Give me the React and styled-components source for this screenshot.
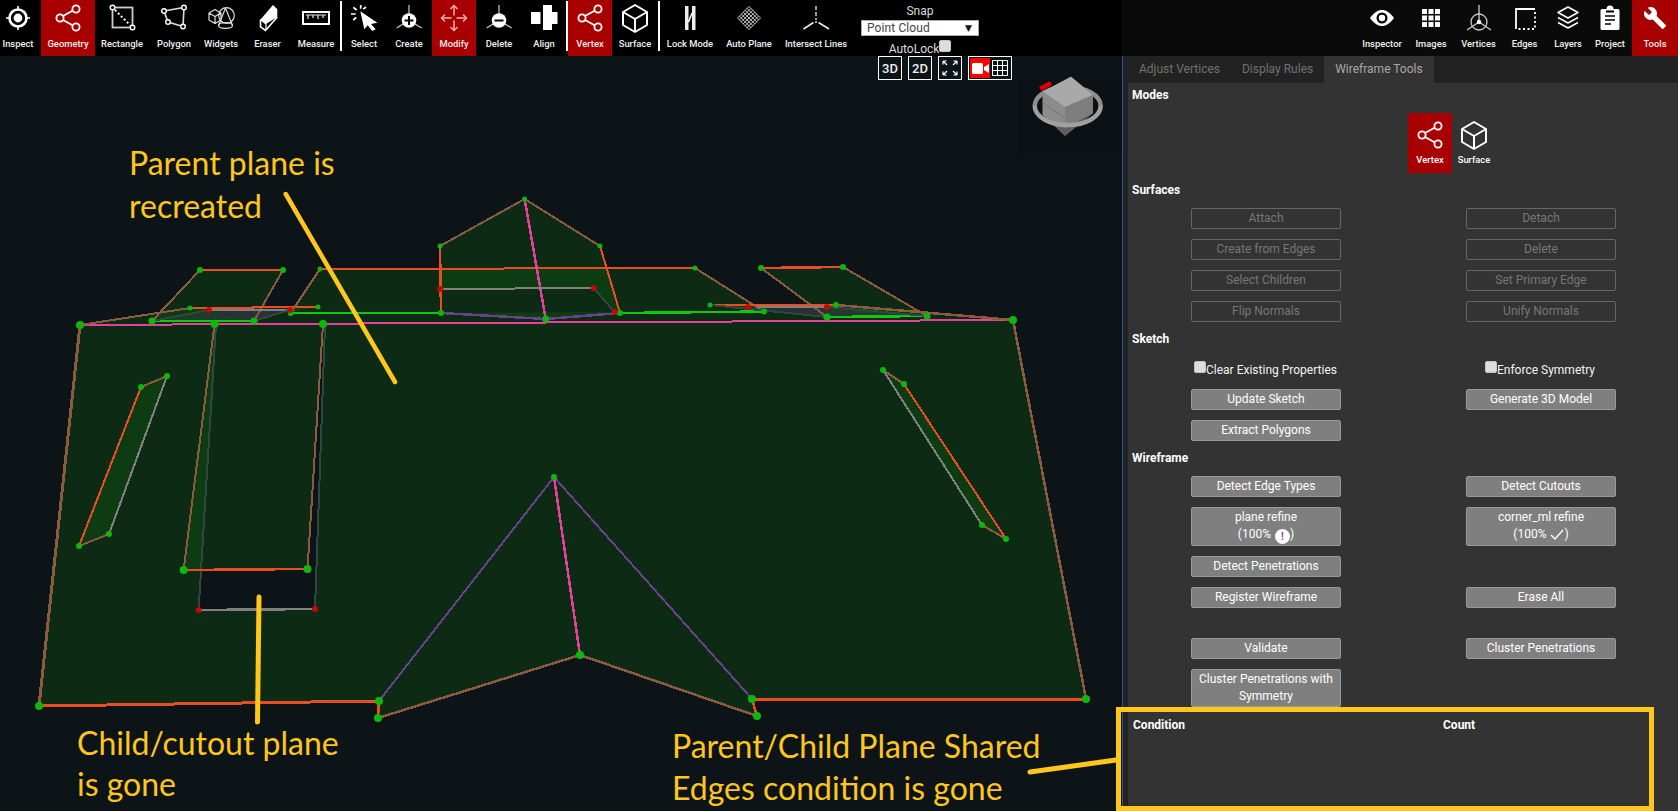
import React from "react";
import styled, { createGlobalStyle } from "styled-components";

const Global = createGlobalStyle`
  html, body { margin: 0; padding: 0; background: #0d1418; }
  body { font-family: Roboto, "Liberation Sans", sans-serif; }
`;

const Page = styled.div`
  position: relative;
  width: 1678px;
  height: 811px;
  overflow: hidden;
  display: flex;
  flex-direction: column;
  background: #0d1418;
`;

const Toolbar = styled.header`
  display: flex;
  height: 56px;
  flex: 0 0 56px;
  position: relative;
  z-index: 2;
`;
const ToolsLeft = styled.div`
  flex: 0 0 1122px;
  display: flex;
  background: #000;
`;
const ToolsRight = styled.div`
  flex: 1;
  display: flex;
  justify-content: flex-end;
  background: #0a0a0a;
`;
const Tool = styled.div`
  flex: 0 0 ${(p) => p.$w}px;
  margin-right: ${(p) => p.$mr || 0}px;
  height: 56px;
  display: flex;
  flex-direction: column;
  align-items: center;
  background: ${(p) => (p.$on ? "#a80000" : "transparent")};
  color: #f0f0f0;
  font-size: 9.4px;
  font-weight: 500;
  white-space: nowrap;
  line-height: 12px;
`;
const ToolIcon = styled.svg`
  width: 32px;
  height: 32px;
  margin-top: 2px;
  margin-bottom: 4px;
  display: block;
  flex: none;
`;
const Sep = styled.div`
  flex: 0 0 2px;
  height: 50px;
  margin-top: 1px;
  background: #fff;
`;

const SnapBlock = styled.div`
  flex: 0 0 118px;
  margin-left: 7px;
  display: flex;
  flex-direction: column;
  align-items: center;
  color: #ddd;
  font-size: 12px;
`;
const SnapLabel = styled.div`
  height: 14px;
  line-height: 14px;
  margin-top: 4px;
  margin-bottom: 2px;
`;
const SnapSelect = styled.div`
  box-sizing: border-box;
  width: 118px;
  height: 18px;
  background: #fff;
  border: 1px solid #aaa;
  color: #444;
  padding: 0 6px 0 5px;
  display: flex;
  justify-content: space-between;
  align-items: center;
  font-size: 12px;
  letter-spacing: 0.1px;
`;
const Caret = styled.span`
  color: #111;
  font-size: 9px;
  font-family: "DejaVu Sans", sans-serif;
`;
const AutoLock = styled.div`
  display: flex;
  align-items: flex-start;
  margin-top: 4px;
  height: 16px;
  line-height: 18px;
`;
const Check = styled.span`
  display: inline-block;
  box-sizing: border-box;
  width: 12px;
  height: 12px;
  background: #ddd;
  border: 1px solid #c4c4c4;
  border-radius: 2px;
  flex: none;
`;

const Main = styled.div`
  flex: 1;
  display: flex;
  min-height: 0;
`;
const Canvas = styled.div`
  flex: 0 0 1122px;
  position: relative;
  background: #0d1418;
`;
const WireSvg = styled.svg`
  position: absolute;
  left: 0;
  top: 0;
  width: 1122px;
  height: 755px;
  overflow: visible;
`;
const ViewControls = styled.div`
  position: absolute;
  left: 878px;
  top: 0;
  display: flex;
  gap: 6px;
`;
const ViewBtn = styled.div`
  box-sizing: border-box;
  height: 24px;
  width: ${(p) => p.$w || 24}px;
  border: 1px solid #fff;
  color: #eee;
  font-size: 13px;
  font-weight: 500;
  display: flex;
  align-items: center;
  justify-content: center;
  padding: ${(p) => (p.$split ? "1px" : "0")};
`;
const CamCell = styled.div`
  width: 20px;
  height: 100%;
  background: #ff0000;
  display: flex;
  align-items: center;
  justify-content: center;
`;
const GridCell = styled.div`
  flex: 1;
  height: 100%;
  display: flex;
  align-items: center;
  justify-content: center;
`;

const Splitter = styled.div`
  flex: 0 0 6px;
  box-sizing: border-box;
  background: #222;
  border-left: 1px solid #2a5a9a;
`;

const Panel = styled.aside`
  flex: 1;
  background: #333;
  display: flex;
  flex-direction: column;
  color: #fff;
  font-size: 12px;
`;
const Tabs = styled.div`
  display: flex;
  height: 27px;
  flex: none;
  background: #222;
`;
const Tab = styled.div`
  height: 27px;
  line-height: 27px;
  padding: 0 11px;
  background: ${(p) => (p.$on ? "#333" : "transparent")};
  color: ${(p) => (p.$on ? "#a8a8a8" : "#717171")};
  font-size: 12px;
`;
const Heading = styled.div`
  height: 14px;
  line-height: 14px;
  font-weight: 700;
  font-size: 12px;
  padding-left: 4px;
  margin-top: ${(p) => p.$mt}px;
`;
const ModeRow = styled.div`
  display: flex;
  margin: 11px 0 0 280px;
  height: 60px;
`;
const Mode = styled.div`
  flex: 0 0 44px;
  height: 60px;
  display: flex;
  flex-direction: column;
  align-items: center;
  background: ${(p) => (p.$on ? "#a80000" : "transparent")};
  font-size: 9.4px;
  font-weight: 500;
  line-height: 12px;
`;
const ModeIcon = styled(ToolIcon)`
  margin-top: 6px;
  margin-bottom: 3px;
`;
const Row = styled.div`
  display: grid;
  grid-template-columns: 150px 150px;
  column-gap: 125px;
  margin-left: 63px;
  margin-top: ${(p) => (p.$mt === undefined ? 10 : p.$mt)}px;
`;
const Btn = styled.div`
  box-sizing: border-box;
  min-height: ${(p) => p.$h || 21}px;
  border: 1px solid ${(p) => (p.$off ? "#666" : "#999")};
  border-radius: 2px;
  background: ${(p) => (p.$off ? "transparent" : "#7f7f7f")};
  color: ${(p) => (p.$off ? "#777" : "#fff")};
  text-align: center;
  font-size: 12px;
  line-height: ${(p) => (p.$tall ? "17px" : "18px")};
  padding: ${(p) => (p.$tall ? "1px 4px" : "0 4px")};
`;
const CheckRow = styled.div`
  display: grid;
  grid-template-columns: 150px 150px;
  column-gap: 125px;
  margin-left: 63px;
  margin-top: 15px;
  height: 16px;
`;
const CheckItem = styled.div`
  display: flex;
  align-items: flex-start;
  padding-left: ${(p) => p.$pl}px;
  line-height: 18px;
  white-space: nowrap;
  color: #f2f2f2;
`;
const Badge = styled.span`
  display: inline-block;
  width: 15px;
  height: 15px;
  line-height: 15px;
  border-radius: 50%;
  background: #fff;
  color: #a040b0;
  font-size: 10px;
  font-weight: 700;
  margin-left: 4px;
  vertical-align: -2px;
`;
const Tick = styled.svg`
  width: 14px;
  height: 12px;
  margin-left: 4px;
  vertical-align: -2px;
`;
const CondTable = styled.div`
  margin-top: 11px;
  display: grid;
  grid-template-columns: 310px 1fr;
  padding-left: 5px;
  font-weight: 700;
  font-size: 12px;
  line-height: 14px;
`;

const Note = styled.div`
  position: absolute;
  left: ${(p) => p.$x}px;
  top: ${(p) => p.$y}px;
  color: #ffc61c;
  font-family: Lato, "Open Sans", sans-serif;
  font-size: 32px;
  line-height: ${(p) => p.$lh}px;
  white-space: nowrap;
  z-index: 3;
`;
const CalloutBox = styled.div`
  position: absolute;
  left: 1116px;
  top: 707px;
  width: 538px;
  height: 104px;
  box-sizing: border-box;
  border: 5px solid #ffc61c;
  z-index: 3;
`;

/* ---------- icons ---------- */
const W = "#fff";
const Icon = ({ children }) => <ToolIcon viewBox="0 0 32 32">{children}</ToolIcon>;

const Inspect = () => (
  <Icon>
    <circle cx="16" cy="16" r="8.5" fill="none" stroke={W} strokeWidth="2.6" />
    <circle cx="16" cy="16" r="4.4" fill={W} />
    <path d="M16 4v3M16 25v3M4 16h3M25 16h3" stroke={W} strokeWidth="1.6" />
  </Icon>
);
const ShareShape = () => (
  <>
    <path d="M11 14L21 8.5M11 18l10 5.5" stroke={W} strokeWidth="1.8" />
    <circle cx="24" cy="7" r="3.6" fill="none" stroke={W} strokeWidth="1.8" />
    <circle cx="8" cy="16" r="3.6" fill="none" stroke={W} strokeWidth="1.8" />
    <circle cx="24" cy="25" r="3.6" fill="none" stroke={W} strokeWidth="1.8" />
  </>
);
const Share = () => <Icon><ShareShape /></Icon>;
const Rectangle = () => (
  <Icon>
    <rect x="6.5" y="5.5" width="20" height="20" fill="none" stroke="#ccc" strokeWidth="1.8" />
    <path d="M9 8L24 23" stroke={W} strokeWidth="2" strokeDasharray="2 2.2" />
    <circle cx="6.5" cy="5.5" r="2.3" fill="#000" stroke={W} strokeWidth="1.4" />
    <circle cx="26.5" cy="25.5" r="2.3" fill="#000" stroke={W} strokeWidth="1.4" />
  </Icon>
);
const Polygon = () => (
  <Icon>
    <path d="M6 9L26 5.5L25 24.5L10 20Z" fill="none" stroke="#ddd" strokeWidth="1.6" />
    {[[6, 9], [26, 5.5], [25, 24.5], [10, 20]].map(([x, y]) => (
      <circle key={x} cx={x} cy={y} r="2.3" fill="#000" stroke={W} strokeWidth="1.4" />
    ))}
  </Icon>
);
const Widgets = () => (
  <Icon>
    <g fill="none" stroke="#ddd" strokeWidth="1.2">
      <circle cx="21.5" cy="13.5" r="7.8" />
      <path d="M20.5 6L13.5 23.5M20.5 6L27.5 23.5" />
      <ellipse cx="20.5" cy="23.5" rx="7" ry="2.8" />
      <path d="M10 7.5L16 11v7l-6 3.5-6-3.5v-7zM4 11l6 3.5 6-3.5M10 14.5v7" />
    </g>
  </Icon>
);
const Eraser = () => (
  <Icon>
    <path d="M21 3l4.3 4.3V15L14 22 8.5 17.500z" fill={W} />
    <path d="M8.500 17.500v7.300l5 3.700L25.300 15" fill="none" stroke={W} strokeWidth="1.6" />
    <path d="M8.500 17.500L14 22v6" fill="none" stroke={W} strokeWidth="1.2" />
  </Icon>
);
const Measure = () => (
  <Icon>
    <rect x="3" y="10" width="26" height="12" fill="none" stroke={W} strokeWidth="2" />
    <path d="M8 13v4M13 13v3M18 13v4M23 13v3" stroke="#ccc" strokeWidth="1.4" />
    <path d="M6 13h20" stroke="#ccc" strokeWidth="1.2" />
  </Icon>
);
const Select = () => (
  <Icon>
    <path d="M12.300 9.300L29.300 20.700L23 22L27.700 27.300L24.300 29L19.700 23.300L16.300 27.300Z" fill={W} />
    <path d="M5.300 5.300L8.700 8M12.700 3v3.700M18 5l-2.700 2.200M3 12h4.700M5.300 18l3-2.700" stroke={W} strokeWidth="1.7" />
  </Icon>
);
const CircleTool = ({ plus }) => (
  <Icon>
    <path d="M16 3v9M10 22l-6.300 4M22 22l6.700 4" stroke="#ccc" strokeWidth="1.2" />
    <circle cx="16" cy="18.500" r="7.300" fill={W} />
    <path d="M11.500 18.500h9" stroke="#000" strokeWidth="2" />
    {plus && <path d="M16 14v9" stroke="#000" strokeWidth="2" />}
  </Icon>
);
const CreateIcon = () => <CircleTool plus />;
const DeleteIcon = () => <CircleTool />;
const Modify = () => (
  <Icon>
    <g fill="none" stroke="#efb0b0" strokeWidth="1.5">
      <path d="M3.500 16h10M18.500 16h10M16 3.500v10M16 18.500v10" />
      <path d="M7 12.500L3.500 16 7 19.500M25 12.500L28.500 16 25 19.500M12.500 7L16 3.500 19.500 7M12.500 25L16 28.500 19.500 25" />
    </g>
  </Icon>
);
const Align = () => (
  <Icon>
    <path d="M3 10h9.500v12H3zM15 3h9v25h-9zM24 10h5.500v12H24z" fill={W} />
  </Icon>
);
const CubeShape = () => (
  <path d="M16 3L28 10V23L16 30L4 23V10ZM4 10L16 17L28 10M16 17V30" fill="none" stroke={W} strokeWidth="2" strokeLinejoin="round" />
);
const Cube = () => <Icon><CubeShape /></Icon>;
const LockMode = () => (
  <Icon>
    <path d="M11 4h3.500v24H11zM18 4h3.500v24H18z" fill="#eee" />
    <path d="M14.500 20L18 11" stroke={W} strokeWidth="1.5" />
  </Icon>
);
const AutoPlane = () => {
  const steps = [0, 1, 2, 3, 4, 5, 6];
  const s = 23 / 6 / 2;
  return (
    <Icon>
      <g stroke="#ddd" strokeWidth="0.9">
        {steps.map((i) => (
          <React.Fragment key={i}>
            <line x1={4.5 + i * s} y1={16 - i * s} x2={16 + i * s} y2={27.5 - i * s} />
            <line x1={4.5 + i * s} y1={16 + i * s} x2={16 + i * s} y2={4.5 + i * s} />
          </React.Fragment>
        ))}
      </g>
    </Icon>
  );
};
const Intersect = () => (
  <Icon>
    <path d="M16 4v4M16 10v4M16 16v2" stroke="#eee" strokeWidth="1.3" />
    <path d="M13.500 20.500L3.500 27M18.500 20.500L29 27" stroke="#eee" strokeWidth="1.5" />
    <circle cx="16" cy="20" r="1" fill="#eee" />
  </Icon>
);
const Eye = () => (
  <Icon>
    <path d="M4 16C8 10.500 12 8 16 8s8 2.500 12 8c-4 5.500-8 8-12 8s-8-2.500-12-8z" fill={W} />
    <circle cx="16" cy="16" r="5.5" fill="#000" />
    <circle cx="16" cy="16" r="3.2" fill={W} />
  </Icon>
);
const Images = () => (
  <Icon>
    {[7, 13.5, 20].flatMap((y) =>
      [7, 13.5, 20].map((x) => <rect key={`${x}-${y}`} x={x} y={y} width="5" height="5" fill={W} />)
    )}
  </Icon>
);
const Vertices = () => (
  <Icon>
    <circle cx="16" cy="20" r="8" fill="none" stroke="#ccc" strokeWidth="1.3" />
    <path d="M16 3v17M16 20L4 28M16 20l12 8" stroke="#ccc" strokeWidth="1.3" />
    <circle cx="16" cy="20" r="2.2" fill={W} />
  </Icon>
);
const Edges = () => (
  <Icon>
    <path d="M7 27V7h19" fill="none" stroke={W} strokeWidth="1.8" />
    <path d="M26 10v17H9" fill="none" stroke={W} strokeWidth="1.8" strokeDasharray="2 2.5" />
  </Icon>
);
const Layers = () => (
  <Icon>
    <g fill="none" stroke={W} strokeWidth="1.5" strokeLinejoin="round">
      <path d="M16 5l10 5.500-10 5.500-10-5.500z" />
      <path d="M6 15.500L16 21l10-5.500" />
      <path d="M6 20.500L16 26l10-5.500" />
    </g>
  </Icon>
);
const Project = () => (
  <Icon>
    <path d="M8 7h4.500a3.500 3.500 0 0 1 7 0H24a1.500 1.500 0 0 1 1.500 1.500v18A1.500 1.500 0 0 1 24 28H8a1.500 1.500 0 0 1-1.500-1.500v-18A1.500 1.500 0 0 1 8 7z" fill={W} />
    <path d="M11 14h10M11 18h10M11 22h6" stroke="#000" strokeWidth="1.7" />
    <rect x="12" y="8.500" width="8" height="2" fill="#000" />
  </Icon>
);
const Tools = () => (
  <Icon>
    <g transform="translate(4 4)">
      <path d="M22.700 19l-9.100-9.100c.9-2.300.4-5-1.500-6.900-2-2-5-2.400-7.400-1.300L9 6 6 9 1.600 4.700C.4 7.100.9 10.100 2.900 12.100c1.900 1.900 4.600 2.400 6.900 1.500l9.100 9.100c.4.400 1 .4 1.400 0l2.300-2.300c.5-.4.5-1.100.1-1.400z" fill={W} />
    </g>
  </Icon>
);

/* ---------- wireframe data ---------- */
const BR = "#8a5b3e";
const OR = "#e84e22";
const PK = "#e5409a";
const PU = "#6a3f8c";
const GN = "#10c810";
const GY = "#808080";
const DG = "#2f473f";

const PLANE = "rgba(16,128,8,0.2)";
const planes = [
  "M80 325L1013 320L1086 699L752 699L757 716L580 655L378 718L379 701L39 706ZM216 325L324 325L315 609L198.6 610Z",
  "M214.6 324L323 324L307.5 569L183.6 570Z",
  "M141 387L167 376L109 534L79 546Z",
  "M883 370L904 384L1006 539L982 525Z",
  "M200 270L283 270L254 321L152 321Z",
  "M761 268L843 267L927 316L827 317Z",
  "M440 246L524.6 199L600 246L620 313L545.7 319L441 313Z",
  "M320 269L695 268L764 311.5L620 313L545.7 319L441 313L290.7 313ZM440.4 289L593.6 288L614.6 312L441 313Z",
  "M80 325L190 308L318 307L290 313L254 321L152 321Z",
  "M710 305L836 305L1013 320L927 316L827 317Z",
  "M152 321L254 321L290.7 313L441 313L545.7 319L620 313L764 311.5L827 317L927 316L1013 320L80 325Z",
];
const tints = [
  ["M209 310L290 310L254 321Z", "#2a2f38"],
  ["M152 321L209 310L254 321Z", "#1e3a2a"],
  ["M757 307L827 307L827 317Z", "#2a2f38"],
  ["M710 305L757 307L827 317Z", "#1e3a2a"],
  ["M827 307L927 316L827 317Z", "#223a30"],
];
const edges = [
  [80, 325, 1013, 320, PK, 2],
  [39, 706, 80, 325, BR, 3],
  [1086, 699, 1013, 320, BR, 2.5],
  [39, 706, 379, 701, OR, 3],
  [379, 701, 378, 718, OR, 2.5],
  [378, 718, 580, 655, BR, 2.5],
  [580, 655, 757, 716, BR, 2.5],
  [757, 716, 752, 699, OR, 2.5],
  [752, 699, 1086, 699, OR, 3],
  [379, 701, 554, 477, PU, 2],
  [554, 477, 752, 699, PU, 2],
  [554, 477, 580, 655, PK, 2.5],
  [216, 325, 198.6, 610, DG, 2],
  [325, 325, 315, 609, DG, 2],
  [214.6, 324, 183.6, 570, BR, 2],
  [323, 324, 307.5, 569, BR, 2],
  [183.6, 570, 307.5, 569, OR, 2.5],
  [198.6, 610, 315, 609, GY, 2.5],
  [141, 387, 167, 376, BR, 2],
  [167, 376, 109, 534, GY, 2],
  [109, 534, 79, 546, BR, 2],
  [79, 546, 141, 387, OR, 2],
  [883, 370, 904, 384, BR, 2],
  [904, 384, 1006, 539, OR, 2],
  [1006, 539, 982, 525, BR, 2],
  [982, 525, 883, 370, GY, 2],
  [200, 270, 283, 270, OR, 2],
  [283, 270, 254, 321, BR, 2],
  [152, 321, 200, 270, BR, 2],
  [152, 321, 254, 321, GN, 2.5],
  [761, 268, 843, 267, OR, 2.5],
  [843, 267, 927, 316, BR, 2],
  [761, 268, 827, 317, BR, 2],
  [827, 317, 927, 316, GN, 2.5],
  [80, 325, 190, 308, BR, 2],
  [190, 308, 318, 307, OR, 2],
  [209, 310, 290, 310, GY, 2],
  [152, 321, 209, 310, DG, 2],
  [254, 321, 290, 310, DG, 2],
  [320, 269, 695, 268, OR, 2],
  [320, 269, 290.7, 313, BR, 2],
  [695, 268, 764, 311.5, BR, 2],
  [290.7, 313, 441, 313, GN, 2],
  [620, 313, 764, 311.5, GN, 2.5],
  [440, 246, 524.6, 199, BR, 2],
  [524.6, 199, 600, 246, BR, 2],
  [600, 246, 620, 313, OR, 2],
  [440, 246, 441, 313, OR, 2.5],
  [524.6, 199, 545.7, 319, PK, 2.5],
  [441, 313, 545.7, 319, PU, 2.5],
  [545.7, 319, 620, 313, PU, 2.5],
  [440.4, 289, 593.6, 288, GY, 2],
  [593.6, 288, 614.6, 312, DG, 2],
  [710, 305, 836, 305, OR, 2],
  [757, 307, 827, 307, GY, 2.5],
  [710, 305, 827, 317, DG, 2],
  [827, 307, 927, 316, DG, 2],
  [836, 305, 1013, 320, BR, 2.5],
];
const greens = [
  [80, 325, 4], [1013, 320, 4], [1086, 699, 4], [39, 706, 4], [379, 701, 4], [378, 718, 4], [757, 716, 4], [752, 699, 4],
  [580, 655, 4], [554, 477, 3], [214.6, 324, 4], [323, 324, 4], [183.6, 570, 4], [307.5, 569, 4],
  [141, 387, 3], [167, 376, 3], [109, 534, 3], [79, 546, 3], [883, 370, 3], [904, 384, 3], [1006, 539, 3], [982, 525, 3],
  [200, 270, 3], [283, 270, 3], [254, 321, 3.5], [152, 321, 3.5], [761, 268, 3], [843, 267, 3], [927, 316, 3.5], [827, 317, 3.5],
  [190, 308, 2.5], [318, 307, 2.5], [320, 269, 2.5], [695, 268, 2.5], [290.7, 313, 3], [441, 313, 3], [620, 313, 3], [764, 311.5, 3],
  [440, 246, 2.5], [600, 246, 2.5], [524.6, 199, 2.5], [545.7, 319, 3.5], [710, 305, 2.5], [836, 305, 3],
];
const reds = [
  [198.6, 610], [315, 609], [209, 310], [290, 310], [440.4, 289], [593.6, 288], [614.6, 312], [748, 307], [827, 307],
];

const Wireframe = () => (
  <WireSvg viewBox="0 56 1122 755">
    <rect x="1018" y="80" width="104" height="76" fill="#0b1114" />
    {planes.map((d) => (
      <path key={d} d={d} fill={PLANE} fillRule="evenodd" />
    ))}
    {tints.map(([d, c]) => (
      <path key={d} d={d} fill={c} />
    ))}
    <g shapeRendering="crispEdges">
      {edges.map(([a, b, c, d, col, w]) => (
        <line key={`${a}-${b}-${c}-${d}`} x1={a} y1={b} x2={c} y2={d} stroke={col} strokeWidth={w} />
      ))}
    </g>
    {greens.map(([x, y, r]) => (
      <circle key={`${x}-${y}`} cx={x} cy={y} r={r} fill="#0cb80c" />
    ))}
    {reds.map(([x, y]) => (
      <circle key={`${x}-${y}`} cx={x} cy={y} r="3" fill="#c40808" />
    ))}

    <g>
      <path d="M1034.7 106A33 19 0 0 1 1100.7 106" fill="none" stroke="#8f8f8f" strokeWidth="4.5" />
      <path d="M1071 76.7L1093 95V113L1065 135.7L1042.700 115V91.700Z" fill="#888" />
      <path d="M1071 76.700L1093 95L1065 107L1042.700 91.700Z" fill="#a9a9a9" />
      <path d="M1042.700 91.700L1065 107V128L1042.700 115Z" fill="#8c8c8c" />
      <path d="M1042.700 103L1065 118" stroke="#777" strokeWidth="1" fill="none" />
      <path d="M1065 107L1093 95V113L1065 128Z" fill="#7e7e7e" />
      <path d="M1065 128L1093 113L1065 135.700L1053 124Z" fill="#5f5f5f" />
      <path d="M1039 86.700L1050 81L1052 85L1041.700 90.700Z" fill="#e00000" />
      <path d="M1034.700 106A33 19 0 0 0 1100.700 106" fill="none" stroke="#a0a0a0" strokeWidth="4.5" />
    </g>

    <g stroke="#ffc61c" strokeLinecap="round" fill="none">
      <line x1="285.7" y1="194" x2="395" y2="382" strokeWidth="4.5" />
      <line x1="259" y1="597" x2="257.5" y2="722" strokeWidth="5" />
      <line x1="1030" y1="772" x2="1116" y2="760" strokeWidth="5" />
    </g>
  </WireSvg>
);

const Row2 = ({ a, b, off, mt, tall }) => (
  <Row $mt={mt}>
    {a ? <Btn $off={off} $tall={tall}>{a}</Btn> : <span />}
    {b ? <Btn $off={off} $tall={tall}>{b}</Btn> : <span />}
  </Row>
);

const leftTools = [
  { label: "Inspect", w: 36, mr: 5, icon: Inspect },
  { label: "Geometry", w: 54, icon: Share, on: true },
  { label: "Rectangle", w: 54, icon: Rectangle },
  { label: "Polygon", w: 50, icon: Polygon },
  { label: "Widgets", w: 44, icon: Widgets },
  { label: "Eraser", w: 49, icon: Eraser },
  { label: "Measure", w: 48, icon: Measure },
  { sep: true, label: "s1" },
  { label: "Select", w: 44, icon: Select },
  { label: "Create", w: 46, icon: CreateIcon },
  { label: "Modify", w: 44, icon: Modify, on: true },
  { label: "Delete", w: 46, icon: DeleteIcon },
  { label: "Align", w: 44, icon: Align },
  { sep: true, label: "s2" },
  { label: "Vertex", w: 44, icon: Share, on: true },
  { label: "Surface", w: 46, icon: Cube },
  { sep: true, label: "s3" },
  { label: "Lock Mode", w: 60, icon: LockMode },
  { label: "Auto Plane", w: 58, icon: AutoPlane },
  { label: "Intersect Lines", w: 76, icon: Intersect },
];
const rightTools = [
  { label: "Inspector", w: 48, icon: Eye },
  { label: "Images", w: 50, icon: Images },
  { label: "Vertices", w: 45, icon: Vertices },
  { label: "Edges", w: 47, icon: Edges },
  { label: "Layers", w: 40, icon: Layers },
  { label: "Project", w: 44, icon: Project },
  { label: "Tools", w: 46, icon: Tools, on: true },
];

const renderTool = (t) => {
  if (t.sep) return <Sep key={t.label} />;
  const Glyph = t.icon;
  return (
    <Tool key={t.label} $w={t.w} $mr={t.mr} $on={t.on}>
      <Glyph />
      <span>{t.label}</span>
    </Tool>
  );
};

export default function App() {
  return (
    <Page>
      <Global />
      <Toolbar>
        <ToolsLeft>
          {leftTools.map(renderTool)}
          <SnapBlock>
            <SnapLabel>Snap</SnapLabel>
            <SnapSelect>
              <span>Point Cloud</span>
              <Caret>▼</Caret>
            </SnapSelect>
            <AutoLock>
              <span>AutoLock</span>
              <Check />
            </AutoLock>
          </SnapBlock>
        </ToolsLeft>
        <ToolsRight>{rightTools.map(renderTool)}</ToolsRight>
      </Toolbar>

      <Main>
        <Canvas>
          <Wireframe />
          <ViewControls>
            <ViewBtn>3D</ViewBtn>
            <ViewBtn>2D</ViewBtn>
            <ViewBtn>
              <svg width="18" height="18" viewBox="0 0 18 18" fill="none" stroke="#fff" strokeWidth="1.2">
                <path d="M2 2l4 4M2 2v3.500M2 2h3.500M16 2l-4 4M16 2v3.500M16 2h-3.500M2 16l4-4M2 16v-3.500M2 16h3.500M16 16l-4-4M16 16v-3.500M16 16h-3.500" />
              </svg>
            </ViewBtn>
            <ViewBtn $w={44} $split>
              <CamCell>
                <svg width="17" height="11" viewBox="0 0 17 11">
                  <rect x="0" y="0" width="11" height="11" rx="1.5" fill="#fff" />
                  <path d="M12 4l5-3v9l-5-3z" fill="#fff" />
                </svg>
              </CamCell>
              <GridCell>
                <svg width="16" height="16" viewBox="0 0 16 16" fill="none" stroke="#fff" strokeWidth="1">
                  <path d="M.5.5h15v15H.5zM5.500.5v15M10.500.5v15M.5 5.500h15M.5 10.500h15" />
                </svg>
              </GridCell>
            </ViewBtn>
          </ViewControls>
        </Canvas>
        <Splitter />
        <Panel>
          <Tabs>
            <Tab>Adjust Vertices</Tab>
            <Tab>Display Rules</Tab>
            <Tab $on>Wireframe Tools</Tab>
          </Tabs>
          <Heading $mt={5}>Modes</Heading>
          <ModeRow>
            <Mode $on>
              <ModeIcon viewBox="0 0 32 32"><ShareShape /></ModeIcon>
              <span>Vertex</span>
            </Mode>
            <Mode>
              <ModeIcon viewBox="0 0 32 32"><CubeShape /></ModeIcon>
              <span>Surface</span>
            </Mode>
          </ModeRow>
          <Heading $mt={10}>Surfaces</Heading>
          <Row2 off mt={11} a="Attach" b="Detach" />
          <Row2 off a="Create from Edges" b="Delete" />
          <Row2 off a="Select Children" b="Set Primary Edge" />
          <Row2 off a="Flip Normals" b="Unify Normals" />
          <Heading $mt={10}>Sketch</Heading>
          <CheckRow>
            <CheckItem $pl={3}><Check />Clear Existing Properties</CheckItem>
            <CheckItem $pl={19}><Check />Enforce Symmetry</CheckItem>
          </CheckRow>
          <Row2 mt={12} a="Update Sketch" b="Generate 3D Model" />
          <Row2 a="Extract Polygons" />
          <Heading $mt={10}>Wireframe</Heading>
          <Row2 mt={11} a="Detect Edge Types" b="Detect Cutouts" />
          <Row>
            <Btn $tall $h={39}>plane refine<br />(100%<Badge>!</Badge>)</Btn>
            <Btn $tall $h={39}>corner_ml refine<br />(100%<Tick viewBox="0 0 14 12"><path d="M1 7l4 4 8-9" fill="none" stroke="#fff" strokeWidth="1.4" /></Tick>)</Btn>
          </Row>
          <Row2 a="Detect Penetrations" />
          <Row2 a="Register Wireframe" b="Erase All" />
          <Row2 mt={30} a="Validate" b="Cluster Penetrations" />
          <Row2 tall a="Cluster Penetrations with Symmetry" />
          <CondTable>
            <span>Condition</span>
            <span>Count</span>
          </CondTable>
        </Panel>
      </Main>

      <CalloutBox />
      <Note $x={129} $y={141} $lh={43}>Parent plane is<br />recreated</Note>
      <Note $x={77} $y={722} $lh={41}>Child/cutout plane<br />is gone</Note>
      <Note $x={672} $y={725} $lh={42}>Parent/Child Plane Shared<br />Edges condition is gone</Note>
    </Page>
  );
}
